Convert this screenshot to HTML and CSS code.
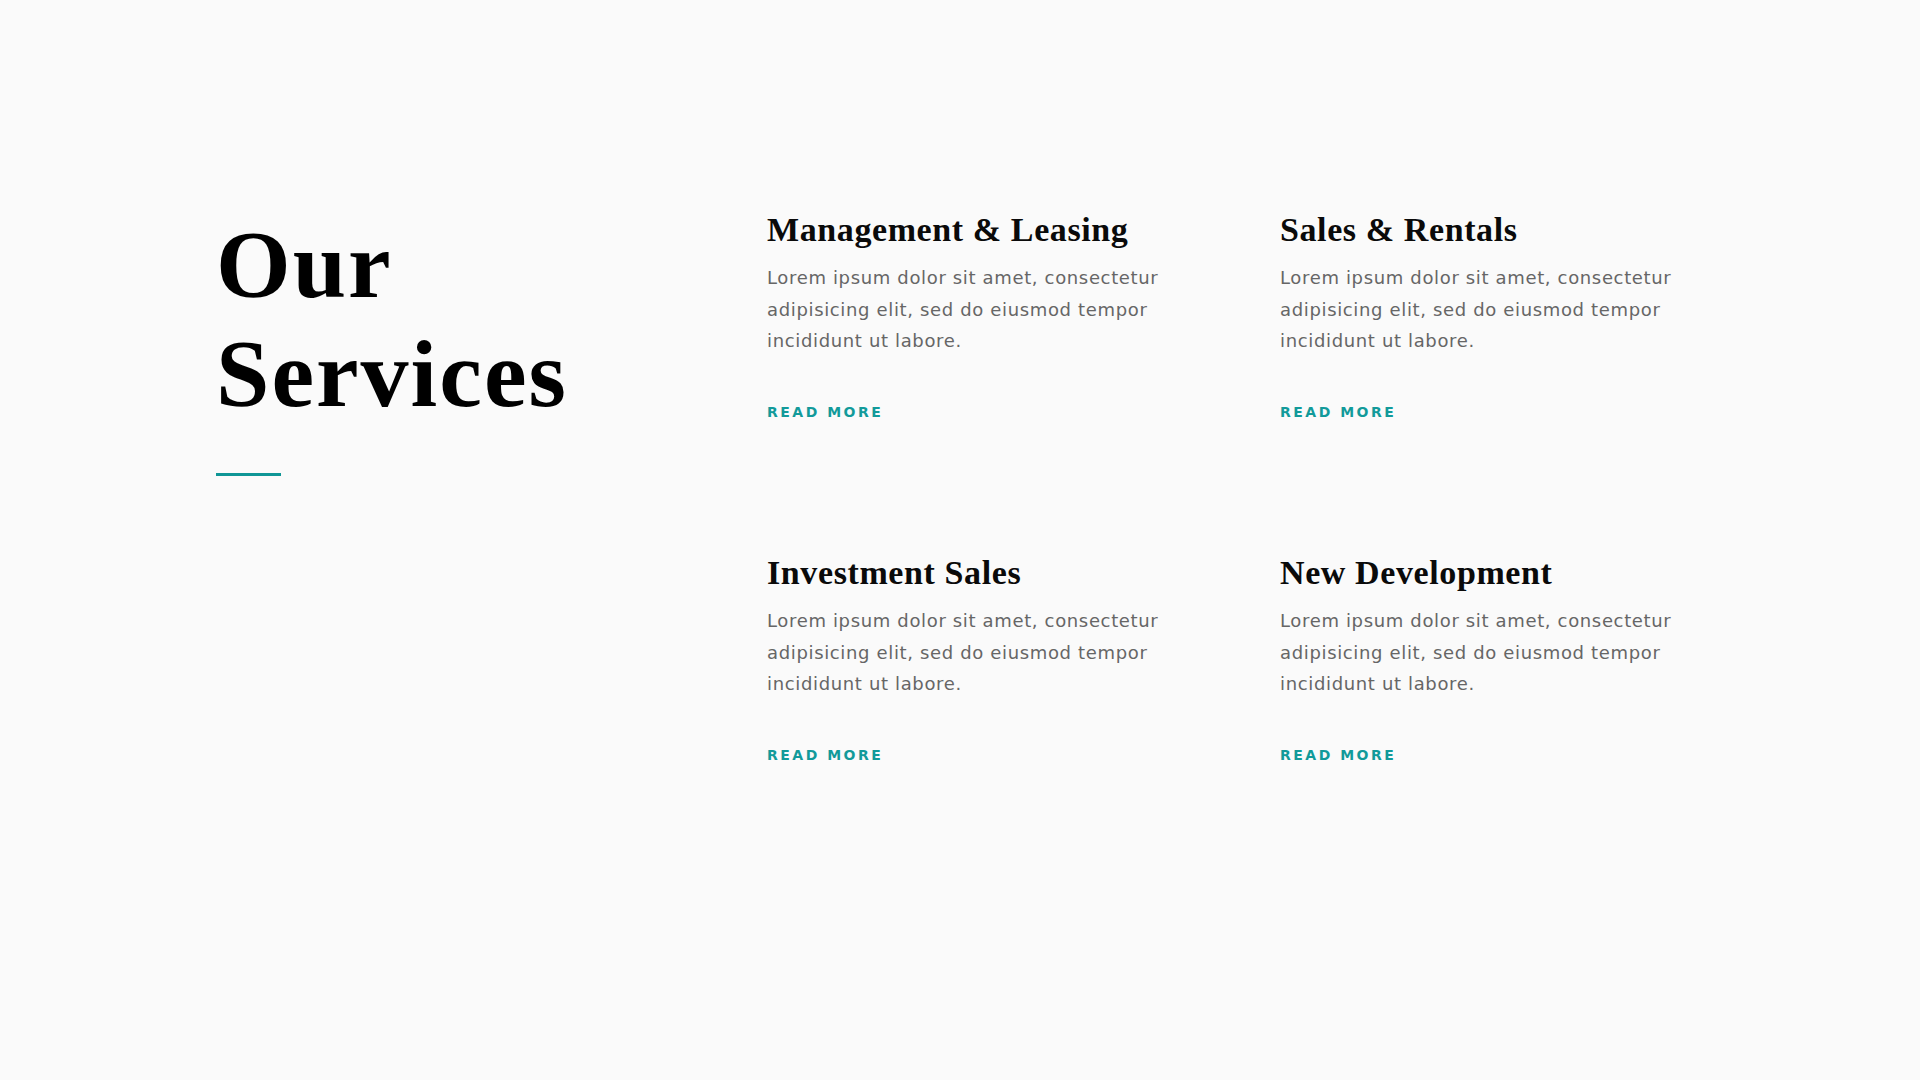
FILE: index.html
```html
<!DOCTYPE html>
<html lang="en">
<head>
<meta charset="utf-8">
<title>Our Services</title>
<link rel="stylesheet" href="styles.css">
</head>
<body>
<section class="services">
  <div class="intro">
    <h1 class="title">Our<br>Services</h1>
    <div class="rule"></div>
  </div>
  <div class="grid">
    <article class="card">
      <h2 class="card-title">Management &amp; Leasing</h2>
      <p class="card-text">Lorem ipsum dolor sit amet, consectetur adipisicing elit, sed do eiusmod tempor incididunt ut labore.</p>
      <a class="card-link" href="#">READ MORE</a>
    </article>
    <article class="card">
      <h2 class="card-title">Sales &amp; Rentals</h2>
      <p class="card-text">Lorem ipsum dolor sit amet, consectetur adipisicing elit, sed do eiusmod tempor incididunt ut labore.</p>
      <a class="card-link" href="#">READ MORE</a>
    </article>
    <article class="card">
      <h2 class="card-title">Investment Sales</h2>
      <p class="card-text">Lorem ipsum dolor sit amet, consectetur adipisicing elit, sed do eiusmod tempor incididunt ut labore.</p>
      <a class="card-link" href="#">READ MORE</a>
    </article>
    <article class="card">
      <h2 class="card-title">New Development</h2>
      <p class="card-text">Lorem ipsum dolor sit amet, consectetur adipisicing elit, sed do eiusmod tempor incididunt ut labore.</p>
      <a class="card-link" href="#">READ MORE</a>
    </article>
  </div>
</section>
</body>
</html>
```
FILE: styles.css
```css
html, body {
  margin: 0;
  padding: 0;
  background: #fafafa;
}
body {
  width: 1920px;
  height: 1080px;
  overflow: hidden;
}
.services {
  display: flex;
  padding: 210px 0 0 216px;
}
.intro {
  width: 551px;
  flex: none;
}
.title {
  margin: 0;
  padding-top: 0;
  font-family: "Liberation Serif", serif;
  font-weight: 700;
  font-size: 96px;
  line-height: 109px;
  color: #000;
  letter-spacing: 2px;
}
.rule {
  width: 65px;
  height: 3px;
  background: #0f9696;
  margin-top: 45px;
}
.grid {
  display: grid;
  grid-template-columns: 513px 513px;
  row-gap: 0;
}
.card {
  height: 343px;
}
.card-title {
  margin: 0;
  font-family: "Liberation Serif", serif;
  font-weight: 700;
  font-size: 34px;
  line-height: 40px;
  letter-spacing: 0.6px;
  color: #0a0a0a;
}
.card-text {
  margin: 12px 0 0;
  width: 440px;
  font-family: "DejaVu Sans", sans-serif;
  font-size: 18px;
  line-height: 31.5px;
  color: #666;
  letter-spacing: 0.65px;
}
.card-link {
  display: inline-block;
  margin-top: 47px;
  font-family: "DejaVu Sans", sans-serif;
  font-weight: 700;
  font-size: 14px;
  letter-spacing: 2.5px;
  color: #129a9a;
  text-decoration: none;
}
```
